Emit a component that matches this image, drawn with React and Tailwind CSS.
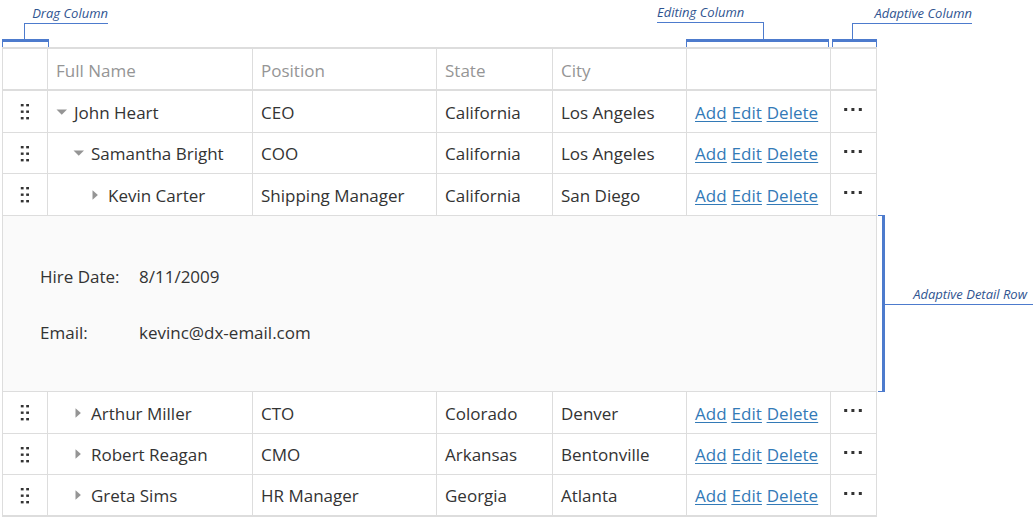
import { Fragment } from "react";

const employees = [
  { name: "John Heart", depth: 0, open: true, position: "CEO", state: "California", city: "Los Angeles" },
  { name: "Samantha Bright", depth: 1, open: true, position: "COO", state: "California", city: "Los Angeles" },
  {
    name: "Kevin Carter",
    depth: 2,
    open: false,
    position: "Shipping Manager",
    state: "California",
    city: "San Diego",
    detail: { hireDate: "8/11/2009", email: "kevinc@dx-email.com" },
  },
  { name: "Arthur Miller", depth: 1, open: false, position: "CTO", state: "Colorado", city: "Denver" },
  { name: "Robert Reagan", depth: 1, open: false, position: "CMO", state: "Arkansas", city: "Bentonville" },
  { name: "Greta Sims", depth: 1, open: false, position: "HR Manager", state: "Georgia", city: "Atlanta" },
];

const indents = ["pl-2", "pl-[25px]", "pl-[42px]"];
const border = "border-r border-b border-[#ddd]";
const iconCell = `${border} px-2 py-0`;
const textCell = `${border} px-2 pt-0.5 pb-0`;
const line = "border-[#4d7bcd]";
const caption = "absolute whitespace-nowrap text-[13px] leading-4 italic text-[#2f5490]";

function DragIcon() {
  return (
    <svg className="block" width="10" height="17" viewBox="0 0 10 17" fill="#333" aria-hidden="true">
      {[1, 7.5, 14].map((y) => (
        <Fragment key={y}>
          <rect x="0.8" y={y} width="2.8" height="2.4" />
          <rect x="6.2" y={y} width="2.8" height="2.4" />
        </Fragment>
      ))}
    </svg>
  );
}

function MoreIcon() {
  return (
    <svg className="block" width="19" height="3" viewBox="0 0 19 3" fill="#333" aria-hidden="true">
      <rect x="0.2" width="3" height="3" />
      <rect x="7.4" width="3" height="3" />
      <rect x="14.8" width="3" height="3" />
    </svg>
  );
}

function ToggleIcon({ open }) {
  return (
    <svg className="block" width="12" height="10" viewBox="0 0 12 10" fill="#959595" aria-hidden="true">
      {open ? <path d="M0.5 2.4h10.5L5.75 7.7z" /> : <path d="M2.5 0.2v9.6L7.9 5z" />}
    </svg>
  );
}

function EmployeeRow({ employee }) {
  const { name, depth, open, position, state, city } = employee;
  return (
    <tr className="h-[42px] even:h-[41px]">
      <td className={iconCell}>
        <button type="button" aria-label={`Drag ${name}`} className="mx-auto block cursor-move">
          <DragIcon />
        </button>
      </td>
      <td className={`${border} pt-0.5 pr-2 ${indents[depth]}`}>
        <div className="flex items-center">
          <button type="button" aria-label={`Toggle ${name}`} aria-expanded={open} className="w-[18px] shrink-0 pb-0.5">
            <ToggleIcon open={open} />
          </button>
          {name}
        </div>
      </td>
      <td className={textCell}>{position}</td>
      <td className={textCell}>{state}</td>
      <td className={textCell}>{city}</td>
      <td className={textCell}>
        <div className="flex gap-[5px] text-[#337ab7] underline underline-offset-2">
          <a href="#add">Add</a>
          <a href="#edit">Edit</a>
          <a href="#delete">Delete</a>
        </div>
      </td>
      <td className={iconCell}>
        <button type="button" aria-label={`More about ${name}`} className="mx-auto block pb-1">
          <MoreIcon />
        </button>
      </td>
    </tr>
  );
}

function DetailRow({ detail }) {
  return (
    <tr className="h-[176px]">
      <td colSpan={7} className={`relative bg-[#fafafa] pt-0.5 pl-[37px] ${border}`}>
        <dl className="grid grid-cols-[99px_1fr] gap-y-8 leading-6">
          <dt>Hire Date:</dt>
          <dd>{detail.hireDate}</dd>
          <dt>Email:</dt>
          <dd>{detail.email}</dd>
        </dl>
        <div className={`absolute -top-px -bottom-px left-full ml-0.5 w-[7px] border-y border-r-3 ${line}`}>
          <div className={`absolute top-[88px] left-full ml-[3px] w-[148px] border-t ${line}`}>
            <span className={`${caption} right-1.5 bottom-full mb-[3px]`}>Adaptive Detail Row</span>
          </div>
        </div>
      </td>
    </tr>
  );
}

function Bracket({ className = "", children }) {
  return (
    <div className={`relative h-2 self-end border-x border-t-3 ${line} ${className}`}>{children}</div>
  );
}

export default function App() {
  return (
    <main className="bg-white pr-[157px] pl-0.5 font-['Open_Sans','Noto_Sans',sans-serif] text-[17px] leading-6 text-[#333]">
      <div className="grid h-[47px] grid-cols-[47px_1fr_143px_45px] gap-x-[3px]">
        <Bracket>
          <div className={`absolute bottom-full left-[21px] mb-[3px] h-4 w-[84px] border-t border-l ${line}`}>
            <span className={`${caption} right-0 bottom-full mb-[3px]`}>Drag Column</span>
          </div>
        </Bracket>
        <Bracket className="col-start-3">
          <div className={`absolute right-[64px] bottom-full mb-[3px] h-[17px] w-[107px] border-t border-r ${line}`}>
            <span className={`${caption} bottom-full left-0 mb-[3px]`}>Editing Column</span>
          </div>
        </Bracket>
        <Bracket>
          <div className={`absolute bottom-full left-[19px] mb-[3px] h-4 w-[120px] border-t border-l ${line}`}>
            <span className={`${caption} right-0 bottom-full mb-[3px]`}>Adaptive Column</span>
          </div>
        </Bracket>
      </div>

      <table className="w-full table-fixed border-separate border-spacing-0 border-t-2 border-l border-[#ddd] text-left">
        <colgroup>
          <col className="w-[45px]" />
          <col />
          <col className="w-[184px]" />
          <col className="w-[116px]" />
          <col className="w-[134px]" />
          <col className="w-[144px]" />
          <col className="w-[46px]" />
        </colgroup>
        <thead className="text-[#959595]">
          <tr className="h-[42px]">
            {["", "Full Name", "Position", "State", "City", "", ""].map((title, i) => (
              <th key={i} scope="col" className="border-r border-b-2 border-[#ddd] px-2 pt-1 pb-0 font-normal">
                {title}
              </th>
            ))}
          </tr>
        </thead>
        <tbody className="[&>tr:last-child>td]:border-b-2">
          {employees.map((employee) => (
            <Fragment key={employee.name}>
              <EmployeeRow employee={employee} />
              {employee.detail && <DetailRow detail={employee.detail} />}
            </Fragment>
          ))}
        </tbody>
      </table>
    </main>
  );
}
